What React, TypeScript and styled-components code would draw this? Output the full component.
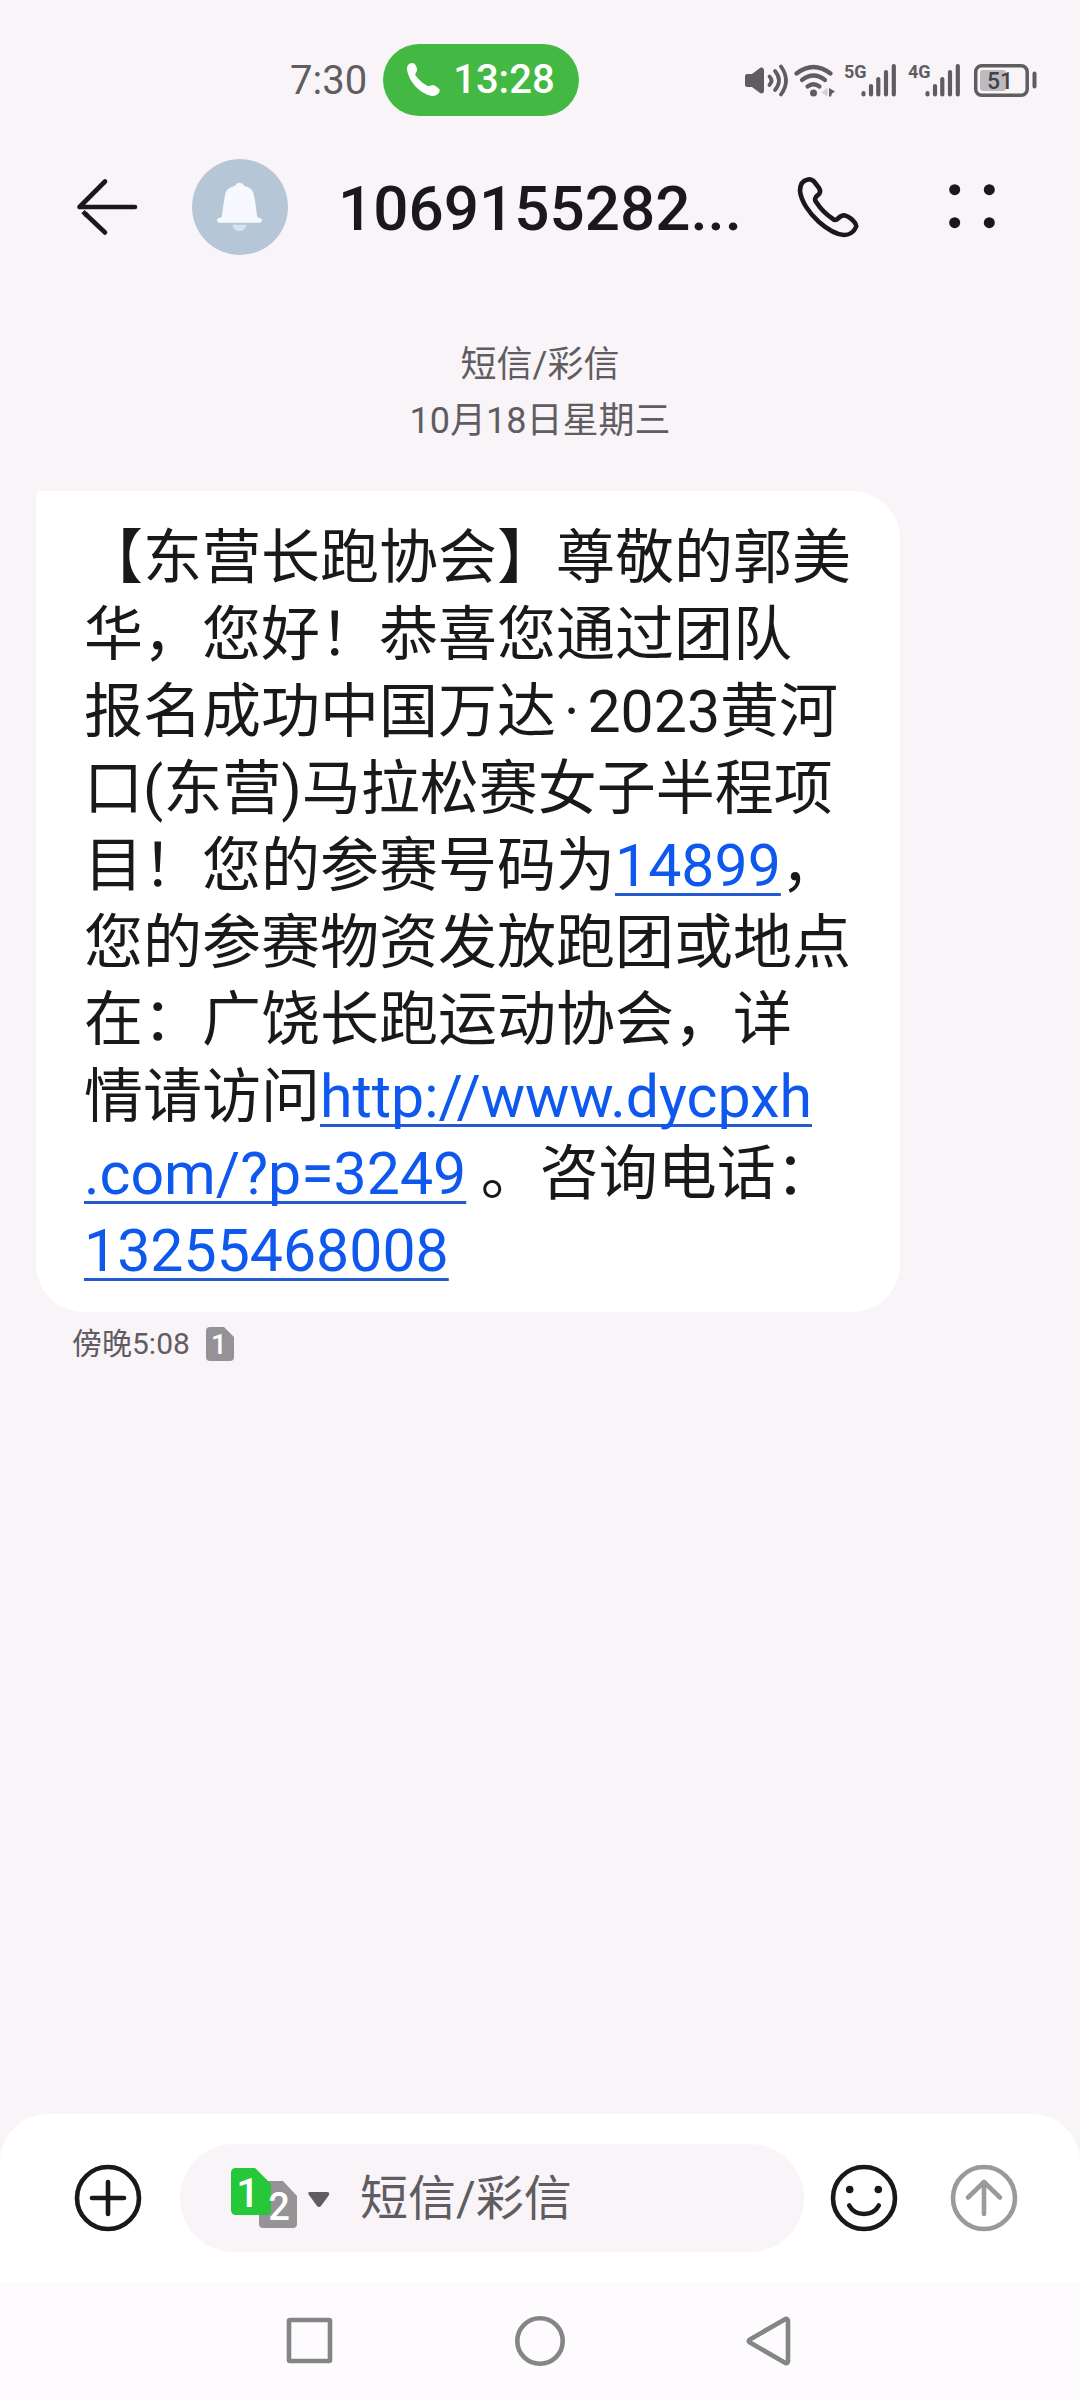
import React from "react";
import styled, { createGlobalStyle } from "styled-components";

const ink = "#19181a";
const muted = "#5f5d61";
const canvas = "#f9f4f8";

const GlobalStyle = createGlobalStyle`
  *, *::before, *::after { box-sizing: border-box; }
  body {
    margin: 0;
    background: ${canvas};
    color: ${ink};
    font-family: Roboto, "Noto Sans CJK SC", sans-serif;
  }
`;

const Page = styled.div`
  display: flex;
  flex-direction: column;
  min-height: 100vh;
  background: ${canvas};
`;

const StatusBar = styled.div`
  display: flex;
  align-items: center;
  height: 159px;
  padding: 0 42px 0 290px;
  color: ${muted};
`;

const Clock = styled.time`
  padding-top: 2px;
  font-size: 40px;
  line-height: 48px;
`;

const CallPill = styled.button`
  display: flex;
  align-items: center;
  gap: 12px;
  height: 72px;
  margin-left: 16px;
  padding: 0 24px 0 22px;
  border: 0;
  border-radius: 36px;
  background: #43b943;
  color: #fff;
  font: 500 40px/48px Roboto, sans-serif;
`;

const StatusIcons = styled.div`
  display: flex;
  align-items: center;
  gap: 4px;
  margin-left: auto;
`;

const Header = styled.header`
  display: flex;
  align-items: center;
  gap: 48px;
  height: 96px;
  padding: 0 72px;
`;

const IconButton = styled.button<{ $tone?: string }>`
  display: flex;
  flex: none;
  align-items: center;
  justify-content: center;
  width: 72px;
  height: 72px;
  padding: 0;
  border: 0;
  background: none;
  color: ${(p) => p.$tone ?? ink};
`;

const Avatar = styled.div`
  display: flex;
  flex: none;
  width: 96px;
  height: 96px;
  border-radius: 50%;
  background: #b5c6d6;
`;

const Title = styled.h1`
  flex: 1;
  min-width: 0;
  margin: 0;
  padding: 4px 0 0 2px;
  overflow: hidden;
  font-size: 62px;
  font-weight: 500;
  line-height: 72px;
  white-space: nowrap;
`;

const HeaderActions = styled.div`
  display: flex;
  gap: 72px;
`;

const Thread = styled.main`
  flex: 1;
  padding: 82px 36px 48px;
`;

const DayLabel = styled.div`
  margin-bottom: 42px;
  color: ${muted};
  font-size: 36px;
  line-height: 56px;
  text-align: center;
`;

const Bubble = styled.p`
  width: 80vw;
  margin: 0;
  padding: 28px 0 23px 48px;
  border-radius: 6px 48px 48px 48px;
  background: #fff;
  font-size: 59px;
  line-height: 77px;
`;

const BubbleLink = styled.a`
  color: #0f58ee;
  text-decoration: underline;
  text-decoration-color: #2459cf;
  text-decoration-skip-ink: none;
  text-decoration-thickness: 3px;
  text-underline-offset: 7px;
`;

const Interpunct = styled.span`
  padding: 0 8px;
`;

const Meta = styled.div`
  display: flex;
  align-items: center;
  gap: 16px;
  margin: 12px 0 0 36px;
  color: ${muted};
  font-size: 30px;
  line-height: 40px;
`;

const Composer = styled.form`
  display: flex;
  align-items: center;
  padding: 30px 60px 30px 72px;
  border-radius: 48px 48px 0 0;
  background: #fff;
`;

const Field = styled.div`
  display: flex;
  flex: 1;
  align-items: center;
  min-width: 0;
  height: 108px;
  margin: 0 24px 0 36px;
  padding: 0 48px;
  border-radius: 54px;
  background: ${canvas};
`;

const SimPicker = styled.button`
  display: flex;
  flex: none;
  margin-right: 28px;
  padding: 0;
  border: 0;
  background: none;
`;

const MessageInput = styled.input`
  flex: 1;
  min-width: 0;
  height: 72px;
  padding: 2px 0 0;
  border: 0;
  outline: 0;
  background: transparent;
  color: ${ink};
  font: 400 48px/72px Roboto, "Noto Sans CJK SC", sans-serif;

  &::placeholder {
    color: ${muted};
    opacity: 1;
  }
`;

const SendSlot = styled.div`
  margin-left: 48px;
`;

const SystemNav = styled.nav`
  display: flex;
  align-items: center;
  justify-content: center;
  gap: 158px;
  height: 118px;
  background: #fdfbfe;
`;

const SimText = styled.text`
  fill: #fff;
  font-family: Roboto, sans-serif;
  font-weight: 500;
  text-anchor: middle;
`;

const NetworkIcon = styled.svg`
  overflow: visible;
`;

const NetworkText = styled.text`
  fill: currentColor;
  font-family: Roboto, sans-serif;
  font-size: 18px;
  font-weight: 700;
`;

const BatteryText = styled.text`
  fill: #454348;
  font-family: Roboto, sans-serif;
  font-size: 23px;
  font-weight: 500;
`;

const line = {
  fill: "none",
  stroke: "currentColor",
  strokeWidth: 4.6,
  strokeLinecap: "round",
  strokeLinejoin: "round",
} as const;

function SoundIcon() {
  return (
    <svg width="46" height="36" viewBox="0 0 46 36" aria-label="声音">
      <path
        d="M3 12h5l8-6c2-1 4 0 4 2v21c0 2-2 3-4 2l-8-6H3c-1 0-2-1-2-2v-9c0-1 1-2 2-2z"
        fill="currentColor"
      />
      <g {...line} strokeWidth={3.8}>
        <path d="M25.5 14.5q4 4 0 8.5" />
        <path d="M31 9q8 9.500 0 19" />
        <path d="M37 4.500q10 14 0 28" />
      </g>
    </svg>
  );
}

function WifiIcon() {
  return (
    <svg width="46" height="36" viewBox="0 0 46 36" aria-label="无线网络">
      <g {...line} strokeWidth={4.2}>
        <path d="M2.500 11.500q17-13 34 0" />
        <path d="M8 18q11.500-9 23 0" />
        <path d="M13.500 24.500q6-4.500 12 0" />
      </g>
      <circle cx="19.500" cy="31" r="3.500" fill="currentColor" />
      <path d="M27.500 30.500l6-5v9z" fill="#d2ced2" />
      <path d="M35 26l6 3.500-3 2-1 3h-2z" fill="currentColor" />
    </svg>
  );
}

function SignalIcon({ network }: { network: string }) {
  return (
    <NetworkIcon width="60" height="36" viewBox="0 0 60 36" aria-label={`${network} 信号`}>
      <NetworkText x="0" y="16">
        {network}
      </NetworkText>
      <g {...line} strokeWidth={4.2}>
        <path d="M19.500 31.200v1.200M27 24v8.400M34.300 17v15.400M42 10v22.400M49.800 4v28.400" />
      </g>
    </NetworkIcon>
  );
}

function BatteryIcon() {
  return (
    <svg width="66" height="36" viewBox="0 0 66 36" aria-label="电量">
      <rect x="3.700" y="3.700" width="51.500" height="29.500" rx="6" fill="none" stroke="currentColor" strokeWidth="3.500" />
      <rect x="8" y="8" width="26" height="21" rx="3" fill="#bdb9bd" />
      <rect x="60.500" y="9.500" width="4" height="17" rx="2" fill="currentColor" />
      <BatteryText x="15" y="26.500">
        51
      </BatteryText>
    </svg>
  );
}

function SimBadge() {
  return (
    <svg width="28" height="34" viewBox="0 0 28 34" aria-label="卡 1">
      <path d="M4 0h14l10 10v20q0 4-4 4H4q-4 0-4-4V4q0-4 4-4z" fill="#959296" />
      <SimText x="13" y="27" fontSize="28">
        1
      </SimText>
    </svg>
  );
}

function SimPickerIcon() {
  return (
    <svg width="104" height="72" viewBox="0 0 104 72" aria-hidden="true">
      <path d="M35 19h20l14 15v28q0 4-4 4H35q-4 0-4-4V23q0-4 4-4z" fill="#969397" />
      <path d="M8 6h19l16 16v26q0 5-5 5H8q-5 0-5-5V11q0-5 5-5z" fill="#26c83a" />
      <SimText x="20" y="45" fontSize="41">
        1
      </SimText>
      <SimText x="51" y="58" fontSize="38">
        2
      </SimText>
      <path d="M82 30h17q3 0 2 3l-8 11q-2 2-4 0l-8-11q-2-3 1-3z" fill="#5f5d61" />
    </svg>
  );
}

export default function App() {
  return (
    <Page lang="zh-CN">
      <GlobalStyle />
      <StatusBar>
        <Clock>7:30</Clock>
        <CallPill type="button">
          <svg width="36" height="36" viewBox="0 0 36 36" aria-hidden="true">
            <path
              d="M4 2C7 0 10 1 11 4c1 2 2 4 0 6.500-1 1.500-1 2.500 0 3.500 3 4 8 8.500 12 10 2 .5 3-1 5-1 2 .5 6 3 6.700 5 .3 3-3.700 6-6.700 6C16 33 3 19 2 7c0-2 .5-4 2-5z"
              fill="#fff"
            />
          </svg>
          13:28
        </CallPill>
        <StatusIcons>
          <SoundIcon />
          <WifiIcon />
          <SignalIcon network="5G" />
          <SignalIcon network="4G" />
          <BatteryIcon />
        </StatusIcons>
      </StatusBar>

      <Header>
        <IconButton type="button" aria-label="返回">
          <svg width="72" height="72" viewBox="0 0 72 72">
            <path {...line} d="M33 10.500L7.500 36H63" />
            <path {...line} d="M14 43.500L33 61.500" />
            <path {...line} strokeLinecap="butt" d="M11 40.700L15 44.500" />
          </svg>
        </IconButton>
        <Avatar>
          <svg width="96" height="96" viewBox="0 0 96 96" aria-hidden="true">
            <path
              d="M47.500 23.700c2 0 3.500 1.300 4.500 3 5 1.800 8.500 3.500 9.500 7.500 2 8 2.500 16 3.800 24.100 2 .6 4.700.8 4.700 2.900 0 1.600-1 2.500-2.500 2.500h-40c-1.500 0-2.500-.9-2.500-2.500 0-2.100 2.700-2.300 4.700-2.900 1.300-8.100 1.800-16.100 3.800-24.100 1-4 4.500-5.700 9.500-7.500 1-1.700 2.500-3 4.500-3z"
              fill="#f8f9ff"
            />
            <path d="M40.500 65.700h14c-.5 4-3.500 6.300-7 6.300s-6.500-2.300-7-6.300z" fill="#d9e0f2" />
          </svg>
        </Avatar>
        <Title>1069155282...</Title>
        <HeaderActions>
          <IconButton type="button" aria-label="拨打电话">
            <svg width="72" height="72" viewBox="0 0 72 72">
              <path
                {...line}
                d="M16 8.500C10.500 9.500 8 14 8 20c1 10 9 22 19 31 8 7 17 12.500 25 13 5 0 10-3 12-8 1-3-2-5.500-4-7.500-2-1.500-4-3.500-7-4-3-.5-5 1-7 3-2 2-4 1.500-5 .5-6-4-13-11-16.500-16.500C22 29 23 26 26 24c2.500-2 2.500-4.500 1-7l-5-6.500c-2-2-4-2.500-6-2z"
              />
            </svg>
          </IconButton>
          <IconButton type="button" aria-label="更多">
            <svg width="72" height="72" viewBox="0 0 72 72" fill="currentColor">
              <circle cx="18.700" cy="18.700" r="5.500" />
              <circle cx="53.300" cy="18.700" r="5.500" />
              <circle cx="18.700" cy="51.700" r="5.500" />
              <circle cx="53.300" cy="51.700" r="5.500" />
            </svg>
          </IconButton>
        </HeaderActions>
      </Header>

      <Thread>
        <DayLabel>
          短信/彩信
          <br />
          10月18日星期三
        </DayLabel>
        <Bubble>
          【东营长跑协会】尊敬的郭美
          <br />
          华，您好！恭喜您通过团队
          <br />
          报名成功中国万达<Interpunct>·</Interpunct>2023黄河
          <br />
          口(东营)马拉松赛女子半程项
          <br />
          目！您的参赛号码为<BubbleLink href="tel:14899">14899</BubbleLink>，
          <br />
          您的参赛物资发放跑团或地点
          <br />
          在：广饶长跑运动协会，详
          <br />
          情请访问
          <BubbleLink href="http://www.dycpxh.com/?p=3249">
            http://www.dycpxh
            <br />
            .com/?p=3249
          </BubbleLink>{" "}
          。咨询电话：
          <br />
          <BubbleLink href="tel:13255468008">13255468008</BubbleLink>
        </Bubble>
        <Meta>
          <span>傍晚5:08</span>
          <SimBadge />
        </Meta>
      </Thread>

      <Composer onSubmit={(e: React.FormEvent) => e.preventDefault()}>
        <IconButton type="button" aria-label="添加附件">
          <svg width="72" height="72" viewBox="0 0 72 72">
            <circle {...line} cx="36" cy="36" r="31" />
            <path {...line} d="M20 36h32M36 20v32" />
          </svg>
        </IconButton>
        <Field>
          <SimPicker type="button" aria-label="选择 SIM 卡" aria-haspopup="listbox">
            <SimPickerIcon />
          </SimPicker>
          <MessageInput type="text" aria-label="短信/彩信" placeholder="短信/彩信" />
        </Field>
        <IconButton type="button" aria-label="表情">
          <svg width="72" height="72" viewBox="0 0 72 72">
            <circle {...line} cx="36" cy="36" r="31" />
            <circle cx="21.700" cy="27.500" r="3.800" fill="currentColor" />
            <circle cx="50.300" cy="27.500" r="3.800" fill="currentColor" />
            <path {...line} d="M21.200 43.500c6 11.300 23.600 11.300 29.600 0" />
          </svg>
        </IconButton>
        <SendSlot>
          <IconButton type="submit" aria-label="发送" $tone="#9b9a9b">
            <svg width="72" height="72" viewBox="0 0 72 72">
              <circle {...line} cx="36" cy="36" r="31" />
              <path {...line} d="M20 35.500L36 20l16 15.500M36 20v32" />
            </svg>
          </IconButton>
        </SendSlot>
      </Composer>

      <SystemNav aria-label="系统导航">
        <IconButton type="button" aria-label="最近任务" $tone="#868586">
          <svg width="72" height="72" viewBox="0 0 72 72">
            <rect {...line} x="15" y="15" width="41" height="41" rx="1" />
          </svg>
        </IconButton>
        <IconButton type="button" aria-label="主屏幕" $tone="#868586">
          <svg width="72" height="72" viewBox="0 0 72 72">
            <circle {...line} cx="36" cy="36" r="22.700" />
          </svg>
        </IconButton>
        <IconButton type="button" aria-label="后退" $tone="#868586">
          <svg width="72" height="72" viewBox="0 0 72 72">
            <path {...line} d="M15.500 34.700q-1.500 1.300 0 2.600L51.500 58q2 .5 2.500-1.500v-41q-.5-2-2.500-1.500z" />
          </svg>
        </IconButton>
      </SystemNav>
    </Page>
  );
}
